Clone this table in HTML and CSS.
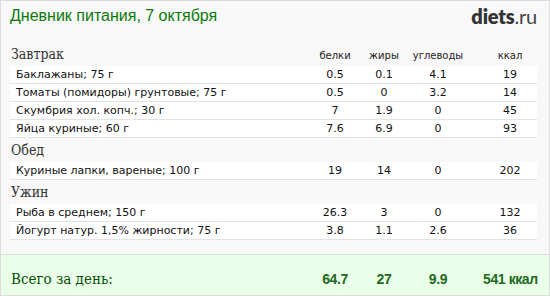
FILE: index.html
```html
<!DOCTYPE html>
<html lang="ru">
<head>
<meta charset="utf-8">
<title>Дневник питания</title>
<link rel="stylesheet" href="styles.css">
</head>
<body>
<div class="page">
  <header class="top">
    <h1 class="title">Дневник питания, 7 октября</h1>
    <div class="logo"><b>diets</b>.ru</div>
  </header>

  <section class="meal">
    <div class="grid meal-head">
      <span class="meal-name">Завтрак</span>
      <span class="col">белки</span>
      <span class="col">жиры</span>
      <span class="col">углеводы</span>
      <span class="col last">ккал</span>
    </div>
    <div class="grid row"><span class="name">Баклажаны; 75 г</span><span class="col">0.5</span><span class="col">0.1</span><span class="col">4.1</span><span class="col last">19</span></div>
    <div class="grid row"><span class="name">Томаты (помидоры) грунтовые; 75 г</span><span class="col">0.5</span><span class="col">0</span><span class="col">3.2</span><span class="col last">14</span></div>
    <div class="grid row"><span class="name">Скумбрия хол. копч.; 30 г</span><span class="col">7</span><span class="col">1.9</span><span class="col">0</span><span class="col last">45</span></div>
    <div class="grid row"><span class="name">Яйца куриные; 60 г</span><span class="col">7.6</span><span class="col">6.9</span><span class="col">0</span><span class="col last">93</span></div>
  </section>

  <section class="meal">
    <div class="grid meal-head"><span class="meal-name">Обед</span></div>
    <div class="grid row"><span class="name">Куриные лапки, вареные; 100 г</span><span class="col">19</span><span class="col">14</span><span class="col">0</span><span class="col last">202</span></div>
  </section>

  <section class="meal">
    <div class="grid meal-head"><span class="meal-name">Ужин</span></div>
    <div class="grid row"><span class="name">Рыба в среднем; 150 г</span><span class="col">26.3</span><span class="col">3</span><span class="col">0</span><span class="col last">132</span></div>
    <div class="grid row"><span class="name">Йогурт натур. 1,5% жирности; 75 г</span><span class="col">3.8</span><span class="col">1.1</span><span class="col">2.6</span><span class="col last">36</span></div>
  </section>

  <footer class="total">
    <div class="grid total-grid">
      <span class="total-label">Всего за день:</span>
      <span class="col num">64.7</span>
      <span class="col num">27</span>
      <span class="col num">9.9</span>
      <span class="col last num">541 ккал</span>
    </div>
  </footer>
</div>
</body>
</html>
```
FILE: styles.css
```css
html, body {
  margin: 0;
  padding: 0;
  background: #fff;
}

.page {
  box-sizing: border-box;
  width: 550px;
  height: 296px;
  border: 1px solid #dcdcdc;
  background: #f8f8f8;
  display: flex;
  flex-direction: column;
  overflow: hidden;
}

.top {
  height: 41px;
  display: flex;
  justify-content: space-between;
  align-items: flex-start;
  padding: 0 12px 0 9px;
}

.title {
  margin: 0;
  padding-top: 5px;
  font-family: "Liberation Sans", Arial, sans-serif;
  font-weight: normal;
  font-size: 16px;
  line-height: 20px;
  color: #0b7a0b;
}

.logo {
  padding-top: 3px;
  font-family: Lato, "Open Sans", sans-serif;
  font-size: 20px;
  line-height: 24px;
  color: #444;
  letter-spacing: -0.2px;
}

.logo b {
  color: #333;
  font-weight: 800;
}

.meal {
  margin: 0 12px 0 9px;
}

.grid {
  display: grid;
  grid-template-columns: 300px 50px 48px 60px 69px;
  align-items: baseline;
}

.col {
  text-align: center;
  white-space: nowrap;
}

.col.last {
  padding-left: 15px;
}

.meal-head {
  height: 24px;
  line-height: 24px;
}

.meal-name {
  padding-left: 1px;
  font-family: "DejaVu Serif Condensed", "DejaVu Serif", serif;
  font-stretch: condensed;
  font-size: 14px;
  color: #333;
}

.meal-head .col {
  font-family: "DejaVu Sans", sans-serif;
  font-size: 10px;
  color: #222;
}

.row {
  height: 17px;
  line-height: 17px;
  background: #fff;
  border-bottom: 1px solid #e3e3e3;
  font-family: "DejaVu Sans", sans-serif;
  font-size: 11px;
  color: #111;
}

.row .name {
  padding-left: 6px;
  white-space: nowrap;
}

.total {
  margin-top: auto;
  box-sizing: border-box;
  height: 41px;
  padding: 8px 12px 0 9px;
  border-top: 1px solid #dcdcdc;
  background: #eaffe8;
  display: flex;
  align-items: center;
}

.total-grid {
  flex: 1;
}

.total-label {
  padding-left: 1px;
  font-family: "DejaVu Serif Condensed", "DejaVu Serif", serif;
  font-stretch: condensed;
  font-size: 15px;
  color: #0a4f0a;
  white-space: nowrap;
}

.total .num {
  font-family: "Liberation Sans Narrow", "Liberation Sans", sans-serif;
  font-stretch: condensed;
  font-weight: bold;
  font-size: 14px;
  letter-spacing: -0.4px;
  color: #1f6a1f;
}
```
